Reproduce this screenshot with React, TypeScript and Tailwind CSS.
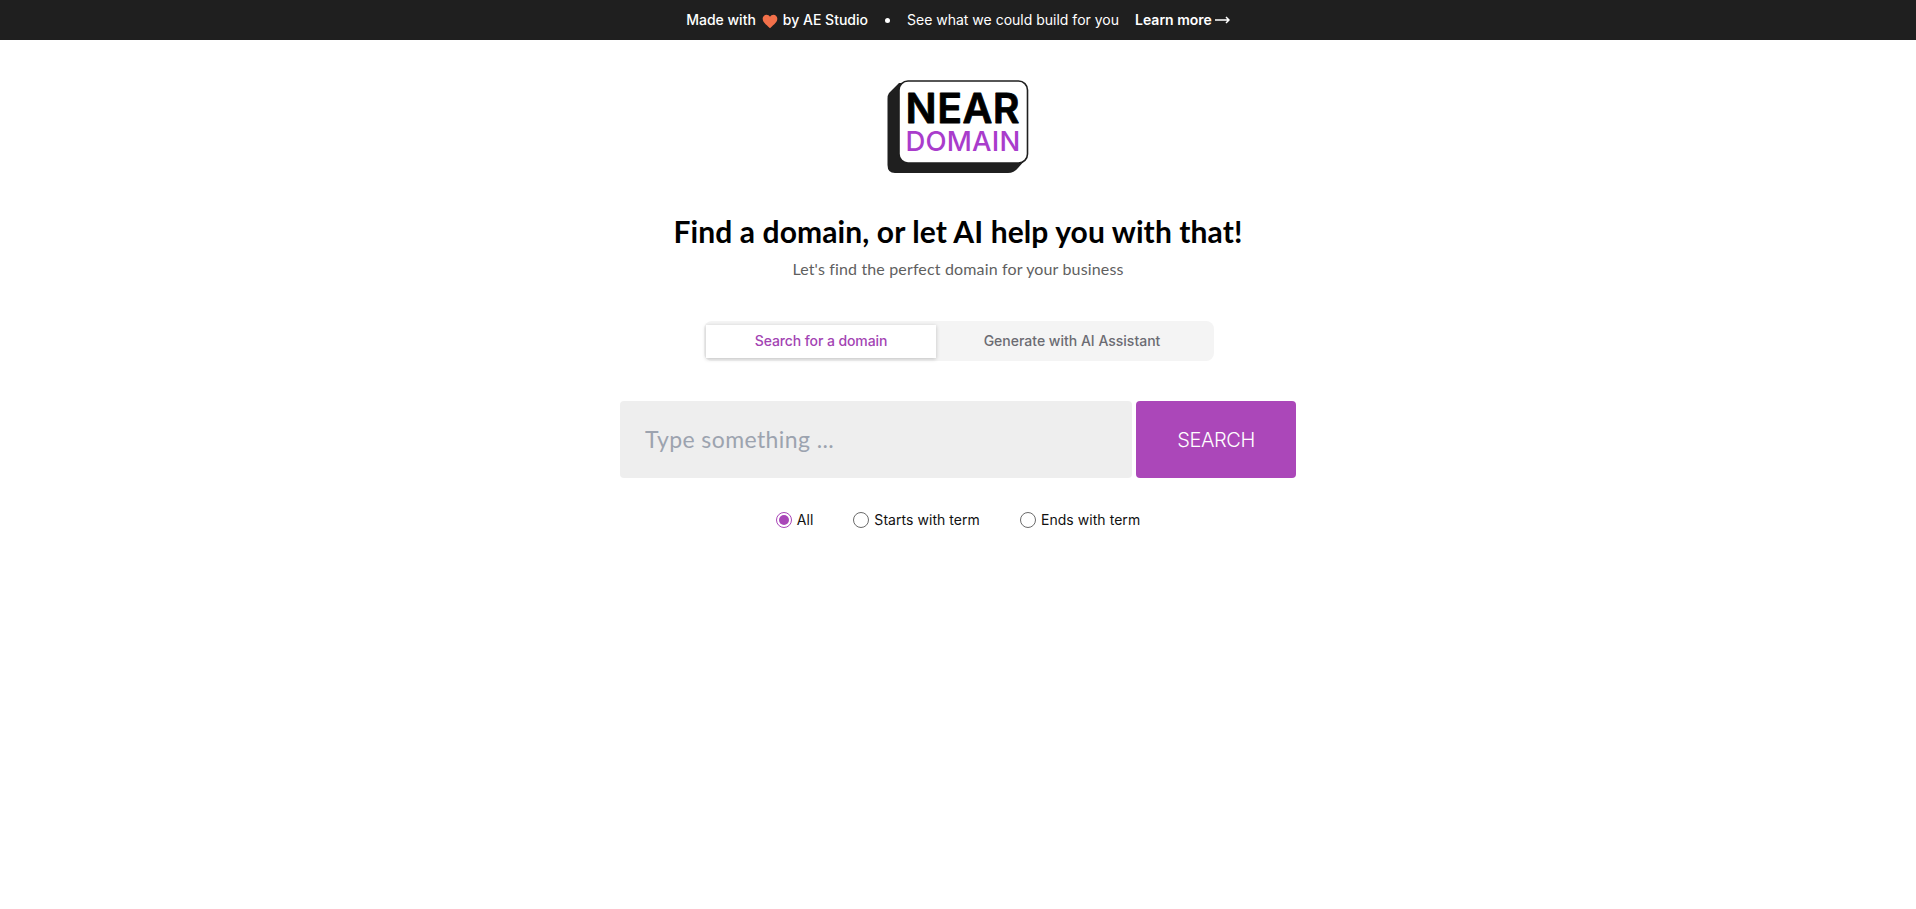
const inter = "font-['Inter',sans-serif]";

const Logo = () => {
  return (
    <svg width="144" height="95" viewBox="0 0 144 95" className="block">
      <path
        d="M13 3 L3 13 Q1.5 15 1.5 19 L1.5 85 Q1.5 93 9 93 L122 93 Q128 93 132 88 L140 79 L140 10 L20 3 Z"
        fill="#1f1f1f"
      />
      <rect x="13" y="1" width="128.5" height="82" rx="9" fill="#fff" stroke="#1f1f1f" strokeWidth="1.6" />
      <text
        x="19.5"
        y="42.5"
        fontFamily="Inter, sans-serif"
        fontWeight="600"
        fontSize="41"
        letterSpacing="0.5"
        fill="#000"
        stroke="#000"
        strokeWidth="0.8"
        strokeLinejoin="round"
      >
        NEAR
      </text>
      <text
        x="19.5"
        y="70.5"
        fontFamily="Inter, sans-serif"
        fontWeight="500"
        fontSize="27.5"
        letterSpacing="0.2"
        fill="#a93ccc"
      >
        DOMAIN
      </text>
    </svg>
  );
};

const Radio = ({ label, checked }: { label: string; checked?: boolean }) => {
  return (
    <label className="flex items-center gap-[5px]">
      {checked ? (
        <span className="flex h-4 w-4 items-center justify-center rounded-full border border-[#a946b8]">
          <span className="h-[10px] w-[10px] rounded-full bg-[#a946b8]" />
        </span>
      ) : (
        <span className="h-4 w-4 rounded-full border border-[#6b6b6b]" />
      )}
      <span className="text-sm tracking-[0.05px] text-[#111]">{label}</span>
    </label>
  );
};

const App = () => {
  return (
    <div className={`min-h-[909px] bg-white ${inter}`}>
      <header className="flex h-10 items-center justify-center bg-[#1f1f1f] text-sm text-white">
        <span className="font-medium">Made with</span>
        <svg width="16" height="15" viewBox="0 0 24 22" className="ml-[6px] mr-[5px] mt-[2px]">
          <path
            d="M12 21 C5 15 1 11.5 1 7 C1 3.5 3.6 1 6.8 1 C9 1 11 2.2 12 4 C13 2.2 15 1 17.2 1 C20.4 1 23 3.5 23 7 C23 11.5 19 15 12 21 Z"
            fill="#f2704a"
          />
        </svg>
        <span className="font-medium">by AE Studio</span>
        <span className="mx-[17px] h-[5px] w-[5px] rounded-full bg-white" />
        <span>See what we could build for you</span>
        <a className="ml-4 flex items-center gap-[3px] font-semibold">
          Learn more
          <svg width="15" height="10" viewBox="0 0 15 10">
            <path d="M0 5 H14 M11 2 L14 5 L11 8" fill="none" stroke="#fff" strokeWidth="1.5" />
          </svg>
        </a>
      </header>

      <main className="flex flex-col items-center pt-10">
        <div className="ml-[-1px]">
          <Logo />
        </div>
        <h1 className="mt-[38px] font-['Lato',sans-serif] text-[30px] leading-9 font-bold tracking-[0.1px] text-black">
          Find a domain, or let AI help you with that!
        </h1>
        <p className="mt-[8px] font-['Lato',sans-serif] text-base leading-6 tracking-[0.15px] text-[#5f5f5f]">
          Let's find the perfect domain for your business
        </p>

        <div className="mt-[40px] ml-[2px] flex h-10 w-[510px] items-center rounded-lg bg-[#f4f4f4] px-[2px] text-sm font-medium">
          <button className="h-[33px] w-[230px] bg-white tracking-[-0.1px] text-[#a344b3] shadow-[0_1px_4px_rgba(0,0,0,0.22)]">
            Search for a domain
          </button>
          <button className="h-[33px] flex-1 pr-[4px] text-[#6b6b72]">Generate with AI Assistant</button>
        </div>

        <div className="mt-[40px] flex h-[77px] w-[676px] gap-[4px]">
          <div className="flex flex-1 items-center rounded-[4px] bg-[#eeeeee] pl-[25px] font-['Lato',sans-serif] text-[23px] tracking-[0.4px] text-[#9ca3af]">
            Type something ...
          </div>
          <button className="w-[160px] rounded-[4px] bg-[#ab47b9] text-xl font-light tracking-[-0.4px] text-white">
            SEARCH
          </button>
        </div>

        <div className="mt-[32px] flex items-center gap-10">
          <Radio label="All" checked />
          <Radio label="Starts with term" />
          <Radio label="Ends with term" />
        </div>
      </main>
    </div>
  );
};

export default App;
